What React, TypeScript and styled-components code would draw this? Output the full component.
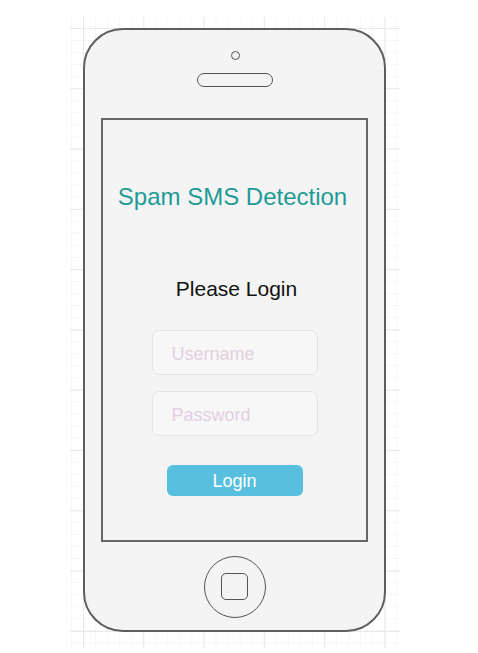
import React from "react";
import styled, { createGlobalStyle } from "styled-components";

const Global = createGlobalStyle`
  html, body { margin: 0; padding: 0; background: #ffffff; }
  body { font-family: "Liberation Sans", Arial, sans-serif; }
  * { box-sizing: border-box; }
`;

const Page = styled.div`
  width: 478px;
  height: 653px;
  padding: 17px 0 0 70px;
  overflow: hidden;
`;

const GridCanvas = styled.div`
  width: 330px;
  height: 631px;
  padding: 11px 0 0 13px;
  background-color: #ffffff;
  background-image:
    linear-gradient(to right, #e8e8e8 1px, transparent 1px),
    linear-gradient(to bottom, #e8e8e8 1px, transparent 1px),
    linear-gradient(to right, #f6f6f6 1px, transparent 1px),
    linear-gradient(to bottom, #f6f6f6 1px, transparent 1px);
  background-size: 60.3px 60.3px, 60.3px 60.3px, 12.06px 12.06px, 12.06px 12.06px;
  background-position: 13px 11px, 13px 11px, 13px 11px, 13px 11px;
`;

const Phone = styled.div`
  width: 303px;
  height: 604px;
  border: 2px solid #5e5e5e;
  border-radius: 40px;
  background: #f4f4f4;
  display: flex;
  flex-direction: column;
  align-items: center;
  padding-top: 20.5px;
`;

const Camera = styled.div`
  width: 9px;
  height: 9px;
  border: 1.3px solid #555;
  border-radius: 50%;
  margin-left: 2px;
`;

const Speaker = styled.div`
  width: 76px;
  height: 14px;
  border: 1.3px solid #555;
  border-radius: 7px;
  margin-top: 13px;
`;

const Screen = styled.div`
  width: 267px;
  height: 424px;
  margin-top: 31px;
  border: 2px solid #666;
  display: flex;
  flex-direction: column;
  align-items: center;
`;

const Title = styled.h1`
  margin: 63px 4px 0 0;
  font-size: 24px;
  line-height: 28px;
  font-weight: normal;
  color: #1f9b97;
`;

const Subtitle = styled.h2`
  margin: 66px 0 0 4px;
  font-size: 21px;
  line-height: 24px;
  font-weight: normal;
  color: #111;
`;

const Input = styled.input<{ $gap: number }>`
  width: 166px;
  height: 45px;
  margin-top: ${(p) => p.$gap}px;
  border: 1.5px solid #e3e3e3;
  border-radius: 7px;
  background: #f7f7f7;
  padding: 5px 0 0 19px;
  font-family: "Liberation Sans", Arial, sans-serif;
  font-size: 18px;
  outline: none;
  &::placeholder {
    color: #e3cfe1;
  }
`;

const LoginButton = styled.button`
  width: 136px;
  height: 31px;
  margin-top: 29px;
  border: none;
  border-radius: 6px;
  background: #58bfde;
  color: #ffffff;
  font-family: "Liberation Sans", Arial, sans-serif;
  font-size: 18px;
  padding: 2px 0 0;
`;

const HomeButton = styled.div`
  width: 62px;
  height: 62px;
  margin-top: 14px;
  border: 1.5px solid #555;
  border-radius: 50%;
  display: flex;
  align-items: center;
  justify-content: center;
`;

const HomeSquare = styled.div`
  width: 27px;
  height: 27px;
  border: 1.5px solid #555;
  border-radius: 5px;
`;

export default function App() {
  return (
    <>
      <Global />
      <Page>
        <GridCanvas>
          <Phone>
            <Camera />
            <Speaker />
            <Screen>
              <Title>Spam SMS Detection</Title>
              <Subtitle>Please Login</Subtitle>
              <Input $gap={29} placeholder="Username" />
              <Input $gap={16} type="password" placeholder="Password" />
              <LoginButton>Login</LoginButton>
            </Screen>
            <HomeButton>
              <HomeSquare />
            </HomeButton>
          </Phone>
        </GridCanvas>
      </Page>
    </>
  );
}
